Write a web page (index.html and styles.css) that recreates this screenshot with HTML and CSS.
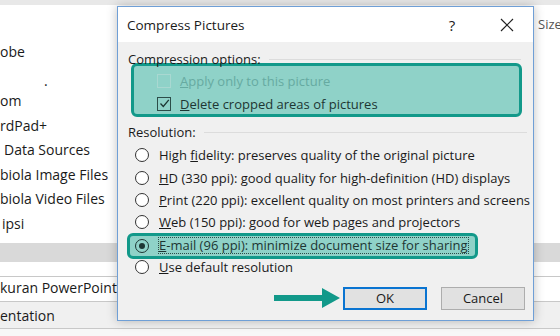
FILE: index.html
```html
<!DOCTYPE html>
<html lang="en">
<head>
  <meta charset="UTF-8">
  <meta name="viewport" content="width=device-width, initial-scale=1.0">
  <title>Compress Pictures</title>
  <link rel="stylesheet" href="styles.css">
</head>
<body>
<div class="page">
  <div class="strip"></div>

  <div class="upper">
    <ul class="file-list">
      <li>obe</li>
      <li class="dot">.</li>
      <li>om</li>
      <li>rdPad+</li>
      <li class="indent">Data Sources</li>
      <li>biola Image Files</li>
      <li>biola Video Files</li>
      <li class="indent-sm">ipsi</li>
    </ul>
    <div class="side">Size</div>
  </div>

  <div class="band"></div>
  <div class="gap-row"></div>
  <div class="list-row">kuran PowerPoint</div>
  <div class="list-row shaded">entation</div>
</div>

<div class="dialog">
  <div class="titlebar">
    <span class="title">Compress Pictures</span>
    <span class="help">?</span>
    <svg class="close" width="14" height="14" viewBox="0 0 14 14">
      <path d="M1 1 L13 13 M13 1 L1 13" stroke="#222" stroke-width="1.2" fill="none"/>
    </svg>
  </div>

  <div class="dialog-body">
    <div class="group-label"><span>Compression options:</span></div>
    <div class="highlight options">
      <label class="check-row disabled">
        <span class="checkbox"></span>
        <span><u>A</u>pply only to this picture</span>
      </label>
      <label class="check-row">
        <span class="checkbox checked">
          <svg width="11" height="11" viewBox="0 0 11 11"><path d="M1.5 5.5 L4.3 8.5 L9.8 1.8" stroke="#1d3633" stroke-width="1.3" fill="none"/></svg>
        </span>
        <span><u>D</u>elete cropped areas of pictures</span>
      </label>
    </div>

    <div class="group-label res"><span>Resolution:</span></div>
    <div class="radio-row"><span class="radio"></span><span>High <u>f</u>idelity: preserves quality of the original picture</span></div>
    <div class="radio-row"><span class="radio"></span><span><u>H</u>D (330 ppi): good quality for high-definition (HD) displays</span></div>
    <div class="radio-row"><span class="radio"></span><span><u>P</u>rint (220 ppi): excellent quality on most printers and screens</span></div>
    <div class="radio-row"><span class="radio"></span><span><u>W</u>eb (150 ppi): good for web pages and projectors</span></div>
    <div class="radio-row highlight selected"><span class="radio on"></span><span class="focus"><u>E</u>-mail (96 ppi): minimize document size for sharing</span></div>
    <div class="radio-row"><span class="radio"></span><span><u>U</u>se default resolution</span></div>

    <div class="buttons">
      <svg class="arrow" width="66" height="22" viewBox="0 0 66 22">
        <path d="M0 8 H48 V1 L66 11 L48 21 V14 H0 Z" fill="#12998a"/>
      </svg>
      <button class="btn default">OK</button>
      <button class="btn">Cancel</button>
    </div>
  </div>
</div>
</body>
</html>
```

FILE: styles.css
```css
* {
  box-sizing: border-box;
}
body {
  margin: 0;
  width: 560px;
  height: 336px;
  overflow: hidden;
  background-color: #fff;
  font-family: "Open Sans", "Noto Sans", sans-serif;
  font-size: 13px;
  color: #1a1a1a;
  position: relative;
}
.page {
  display: flex;
  flex-direction: column;
  height: 336px;
  background-color: #f7f7f7;
}
.strip {
  height: 5px;
  background-color: #e8e8e8;
}
.upper {
  height: 238px;
  display: flex;
  justify-content: space-between;
  background-color: #fff;
}
.file-list {
  list-style: none;
  margin: 0;
  padding: 35px 0 0 0;
  font-size: 14px;
}
.file-list li {
  height: 24.5px;
  line-height: 24.5px;
  white-space: nowrap;
}
.file-list .dot {
  padding: 4px 0 0 44px;
}
.file-list .indent {
  padding-left: 4px;
}
.file-list .indent-sm {
  padding-left: 2px;
}
.side {
  padding: 10px 0 0 0;
  width: 22px;
  overflow: hidden;
  color: #555;
  font-size: 13px;
  white-space: nowrap;
}
.band {
  height: 19px;
  background-color: #d9d9d9;
}
.gap-row {
  height: 15px;
  background-color: #fff;
  border-bottom: 1px solid #c8c8c8;
}
.list-row {
  height: 25px;
  line-height: 22px;
  font-size: 14px;
  background-color: #fff;
  border-bottom: 1px solid #c8c8c8;
  white-space: nowrap;
}
.list-row.shaded {
  height: 27px;
  line-height: 28px;
  background-color: #f0f0f0;
}

/* dialog window */
.dialog {
  position: absolute;
  left: 117px;
  top: 6px;
  width: 417px;
  height: 315px;
  border: 1px solid #6f9fd6;
  background-color: #f0f0f0;
  box-shadow: 0 0 10px rgba(0, 0, 0, 0.25);
}
.titlebar {
  height: 35px;
  background-color: #fff;
  display: flex;
  align-items: center;
  padding: 0 0 0 9px;
}
.title {
  font-size: 13.5px;
  flex: 1;
}
.help {
  font-size: 15px;
  width: 20px;
  margin-right: 38px;
  text-align: center;
}
.close {
  margin-right: 19px;
}
.dialog-body {
  padding: 9px 0 0 10px;
}
.group-label {
  display: flex;
  align-items: center;
  height: 16px;
  line-height: 16px;
  margin-right: 12px;
}
.group-label::after {
  content: "";
  flex: 1;
  height: 1px;
  margin-left: 8px;
  background-color: #dcdcdc;
}
.group-label.res {
  margin-top: 7px;
  margin-right: 6px;
}
.highlight {
  background-color: #8fd2c8;
  border: 3px solid #12998a;
  border-radius: 6px;
  color: #1d3633;
}
.options {
  height: 54px;
  margin: -4px 11px 0 3px;
  padding: 3px 0 0 23px;
}
.check-row {
  display: flex;
  align-items: center;
  height: 23px;
}
.checkbox {
  width: 14px;
  height: 14px;
  border: 1px solid #2c4d49;
  margin-right: 9px;
  display: flex;
  align-items: center;
  justify-content: center;
}
.check-row.disabled {
  color: #66aaa1;
}
.check-row.disabled .checkbox {
  border-color: #a9d8d1;
}
.radio-row {
  display: flex;
  align-items: center;
  height: 22.4px;
  padding-left: 7px;
  white-space: nowrap;
}
.group-label.res + .radio-row {
  margin-top: 4px;
}
.radio {
  width: 14px;
  height: 14px;
  border: 1px solid #333;
  border-radius: 50%;
  background-color: #fff;
  margin-right: 10px;
  display: flex;
  align-items: center;
  justify-content: center;
}
.radio.on {
  background-color: transparent;
  border-color: #1d3633;
}
.radio.on::after {
  content: "";
  width: 6px;
  height: 6px;
  border-radius: 50%;
  background-color: #1d3633;
}
.radio-row.selected {
  width: fit-content;
  height: 26px;
  margin: -1px 0 -3px -1px;
  padding: 0 7px 0 5px;
}
.focus {
  outline: 1px dotted #2c4d49;
  line-height: 15px;
}
.buttons {
  display: flex;
  align-items: center;
  justify-content: flex-end;
  margin-top: 9px;
  padding-right: 8px;
}
.arrow {
  margin-right: 3px;
}
.btn {
  width: 84px;
  height: 23px;
  margin-left: 14px;
  padding: 0;
  font-family: inherit;
  font-size: 13px;
  color: #1a1a1a;
  background-color: #e1e1e1;
  border: 1px solid #adadad;
}
.btn.default {
  margin-left: 0;
  border: 2px solid #0a74d1;
}
```
